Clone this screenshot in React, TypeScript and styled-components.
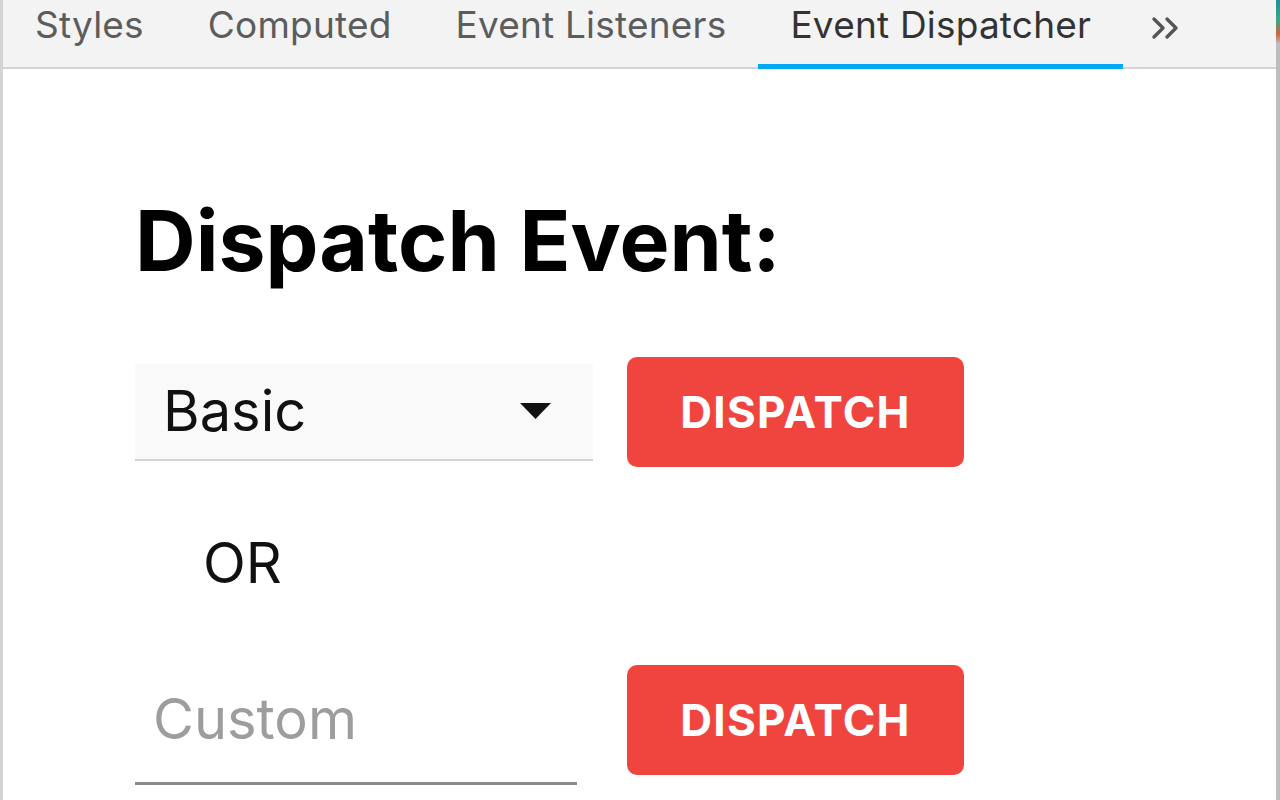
import React from "react";
import styled, { createGlobalStyle } from "styled-components";

const GlobalStyle = createGlobalStyle`
  html, body { margin: 0; padding: 0; background: #ffffff; }
  body { font-family: Inter, "Liberation Sans", Arial, sans-serif; }
  * { box-sizing: border-box; }
`;

const Frame = styled.div`
  display: flex;
  width: 1280px;
  height: 800px;
  overflow: hidden;
  border-left: 3px solid #d3d3d3;
`;

const Panel = styled.div`
  flex: 1;
  display: flex;
  flex-direction: column;
  min-width: 0;
`;

const EdgeStrip = styled.div`
  width: 4px;
  display: flex;
  flex-direction: column;
  background: #bdbdbd;
`;

const EdgeColor = styled.div`
  height: 43px;
  background: linear-gradient(180deg, #1f8f9a 0%, #3aa58a 45%, #d0643a 80%, #b9b9b9 100%);
`;

const TabBar = styled.div`
  display: flex;
  height: 69px;
  background: #f3f3f3;
  box-shadow: inset 0 -2px 0 #d4d4d4;
`;

const Tab = styled.div<{ $active?: boolean }>`
  padding: 0 32px;
  font-size: 37px;
  letter-spacing: 0.2px;
  line-height: 49px;
  color: ${(p) => (p.$active ? "#333333" : "#5c5c5c")};
  white-space: nowrap;
  box-shadow: ${(p) => (p.$active ? "inset 0 -5px 0 #03a9f4" : "none")};
`;

const More = styled.div`
  padding: 16px 0 0 28px;
  color: #555555;
`;

const Content = styled.div`
  padding: 122px 0 0 132px;
  display: flex;
  flex-direction: column;
  align-items: flex-start;
`;

const Heading = styled.h1`
  margin: 0 0 66px 0;
  font-size: 84px;
  line-height: 100px;
  font-weight: 700;
  color: #000000;
`;

const Row = styled.div<{ $gap: number }>`
  display: flex;
  align-items: center;
  gap: ${(p) => p.$gap}px;
`;

const Select = styled.div`
  width: 458px;
  height: 97px;
  background: #f9f9f9;
  border-bottom: 2px solid #d4d4d4;
  display: flex;
  align-items: center;
  justify-content: space-between;
  padding: 0 42px 0 28px;
  font-size: 56px;
  color: #111111;
`;

const DispatchButton = styled.button`
  width: 337px;
  height: 110px;
  border: none;
  border-radius: 10px;
  background: #f0453f;
  color: #ffffff;
  font-family: Inter, "Liberation Sans", Arial, sans-serif;
  font-size: 44px;
  font-weight: 700;
  letter-spacing: 1.3px;
  padding: 0;
`;

const Or = styled.div`
  margin: 62px 0 58px 68px;
  font-size: 56px;
  color: #111111;
`;

const CustomInput = styled.input`
  width: 442px;
  height: 130px;
  border: none;
  border-bottom: 3px solid #8a8a8a;
  background: transparent;
  padding: 0 0 0 18px;
  font-family: Inter, "Liberation Sans", Arial, sans-serif;
  font-size: 56px;
  color: #111111;
  outline: none;
  &::placeholder { color: #9d9d9d; }
`;

const Chevrons = () => (
  <svg width="30" height="24" viewBox="0 0 30 24" fill="none" stroke="#555" strokeWidth="3.4" strokeLinecap="round" strokeLinejoin="round">
    <polyline points="3,3 12,12 3,21" />
    <polyline points="16,3 25,12 16,21" />
  </svg>
);

const Caret = () => (
  <svg width="31" height="16" viewBox="0 0 31 16">
    <polygon points="0,0 31,0 15.5,16" fill="#111" />
  </svg>
);

export default function App() {
  return (
    <>
      <GlobalStyle />
      <Frame>
        <Panel>
          <TabBar>
            <Tab>Styles</Tab>
            <Tab>Computed</Tab>
            <Tab>Event Listeners</Tab>
            <Tab $active>Event Dispatcher</Tab>
            <More>
              <Chevrons />
            </More>
          </TabBar>
          <Content>
            <Heading>Dispatch Event:</Heading>
            <Row $gap={34}>
              <Select>
                <span>Basic</span>
                <Caret />
              </Select>
              <DispatchButton>DISPATCH</DispatchButton>
            </Row>
            <Or>OR</Or>
            <Row $gap={50}>
              <CustomInput placeholder="Custom" />
              <DispatchButton>DISPATCH</DispatchButton>
            </Row>
          </Content>
        </Panel>
        <EdgeStrip>
          <EdgeColor />
        </EdgeStrip>
      </Frame>
    </>
  );
}
